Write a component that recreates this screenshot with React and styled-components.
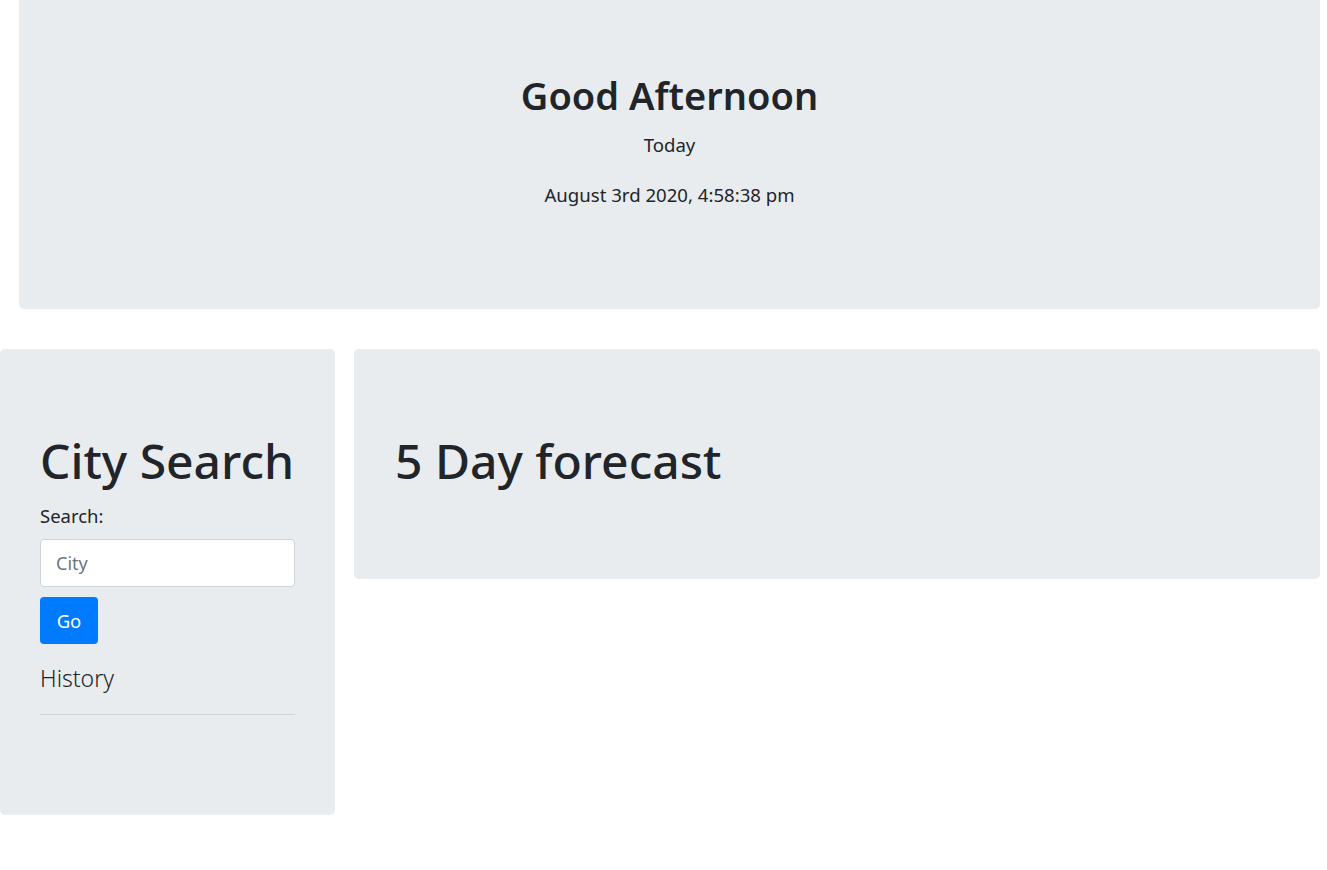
import React from 'react';
import styled, { createGlobalStyle } from 'styled-components';

const GlobalStyle = createGlobalStyle`
  body {
    margin: 0;
    background: #ffffff;
    color: #212529;
    font-family: "Noto Sans", "Open Sans", sans-serif;
  }
  * { box-sizing: border-box; }
`;

const Page = styled.div`
  padding-right: 7px;
  display: flex;
  flex-direction: column;
  gap: 40px;
`;

const Jumbotron = styled.header`
  margin-left: 19px;
  height: 309px;
  background: #e9ecef;
  border-radius: 0 0 5px 5px;
  padding-top: 73px;
  display: flex;
  flex-direction: column;
  align-items: center;
  text-align: center;
`;

const Greeting = styled.h1`
  margin: 0 0 12px;
  font-size: 38px;
  font-weight: 600;
  line-height: 1.2;
`;

const Line = styled.p`
  margin: 0 0 ${p => p.$gap || 0}px;
  font-size: 18.6px;
  line-height: 1.5;
`;

const Row = styled.div`
  display: flex;
  gap: 19px;
  align-items: flex-start;
`;

const Panel = styled.section`
  background: #e9ecef;
  border-radius: 5px;
  padding: ${p => p.$pad};
  width: ${p => p.$width || 'auto'};
  flex: ${p => p.$grow ? 1 : 'none'};
  display: flex;
  flex-direction: column;
  align-items: flex-start;
`;

const Display = styled.h1`
  margin: 0;
  font-size: 48px;
  font-weight: 500;
  line-height: 1.2;
  white-space: nowrap;
`;

const Label = styled.label`
  margin: 12px 0 10px;
  font-size: 18.5px;
  line-height: 1.5;
`;

const Input = styled.input`
  width: 255px;
  height: 48px;
  padding: 0 15px;
  border: 1px solid #ced4da;
  border-radius: 4px;
  background: #fff;
  font-family: inherit;
  font-size: 18px;
  color: #495057;
  &::placeholder { color: #6c757d; }
`;

const Button = styled.button`
  margin-top: 10px;
  width: 58px;
  height: 47px;
  border: none;
  border-radius: 4px;
  background: #007bff;
  color: #fff;
  font-family: inherit;
  font-size: 18.5px;
`;

const SubHead = styled.h4`
  margin: 21px 0 0;
  font-size: 23px;
  font-weight: 300;
  line-height: 1.2;
`;

const Rule = styled.hr`
  width: 255px;
  margin: 21px 0 0;
  border: 0;
  border-top: 1px solid rgba(0, 0, 0, 0.1);
`;

export default function App() {
  return (
    <>
      <GlobalStyle />
      <Page>
        <Jumbotron>
          <Greeting>Good Afternoon</Greeting>
          <Line $gap={23}>Today</Line>
          <Line>August 3rd 2020, 4:58:38 pm</Line>
        </Jumbotron>
        <Row>
          <Panel $width="335px" $pad="83px 40px 100px">
            <Display>City Search</Display>
            <Label htmlFor="city">Search:</Label>
            <Input id="city" placeholder="City" />
            <Button>Go</Button>
            <SubHead>History</SubHead>
            <Rule />
          </Panel>
          <Panel $grow $pad="83px 41px 89px">
            <Display>5 Day forecast</Display>
          </Panel>
        </Row>
      </Page>
    </>
  );
}
